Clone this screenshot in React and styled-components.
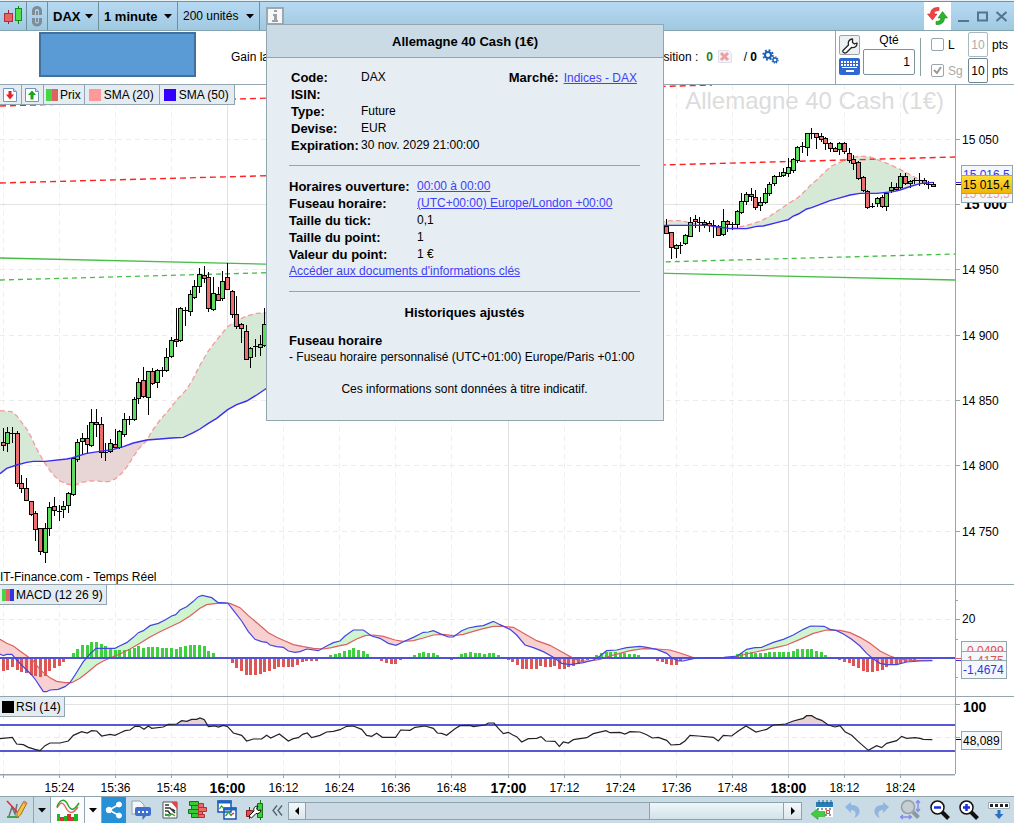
import React from 'react';
import styled, { createGlobalStyle, css } from 'styled-components';

const PLOT_WIDTH = 955;
const AXIS_WIDTH = 59;

// chart data is stored in thirds of a pixel
const UNIT = 3;
const HOUR_X = 227.5;
const MINUTE = 4.675;

const COLORS = {
    up: '#5ddc5d',
    down: '#ec6f6f',
    line: '#93a6af',
    blue: '#3a2cf0',
    panel: '#e4ecf2'
};

// [direction, body top, body bottom, high, low]; 'd' is a doji
const MORNING = {
    start: -48,
    top: 166,
    bars: [
        ['r', 577, 587, 535, 600], ['g', 547, 580, 530, 602], ['d', 549, 549, 530, 575], ['r', 549, 700, 543, 707],
        ['r', 698, 712, 675, 727], ['r', 713, 748, 685, 748], ['r', 752, 792, 752, 795], ['r', 788, 835, 783, 870],
        ['r', 833, 902, 833, 910], ['g', 833, 905, 820, 938], ['g', 772, 835, 757, 857], ['r', 768, 780, 740, 795],
        ['d', 782, 782, 765, 810], ['g', 768, 777, 752, 800], ['g', 730, 767, 725, 785], ['g', 625, 733, 625, 735],
        ['g', 577, 628, 568, 635], ['g', 565, 574, 550, 610], ['r', 563, 580, 525, 610], ['g', 515, 583, 477, 587],
        ['r', 515, 522, 477, 558], ['r', 522, 605, 500, 620], ['d', 605, 605, 580, 632], ['g', 580, 603, 568, 608],
        ['r', 581, 590, 538, 592], ['g', 542, 590, 540, 595], ['g', 508, 553, 488, 558], ['d', 506, 506, 497, 522],
        ['g', 448, 508, 440, 510], ['g', 396, 444, 385, 460], ['r', 390, 437, 350, 440], ['g', 362, 440, 362, 490],
        ['r', 364, 400, 355, 402], ['g', 360, 397, 358, 413], ['d', 359, 359, 350, 377], ['g', 322, 360, 293, 362],
        ['g', 270, 318, 262, 322], ['r', 268, 274, 173, 288], ['g', 175, 270, 170, 273], ['d', 181, 181, 170, 225],
        ['g', 133, 185, 120, 195], ['g', 107, 140, 90, 145], ['g', 72, 107, 55, 127], ['r', 74, 82, 48, 95],
        ['r', 80, 172, 65, 182], ['g', 128, 175, 80, 180], ['r', 131, 148, 112, 150], ['g', 94, 145, 62, 148],
        ['r', 82, 117, 40, 118], ['r', 123, 192, 120, 200], ['r', 192, 229, 137, 232], ['r', 223, 235, 218, 275],
        ['r', 242, 325, 225, 328], ['g', 294, 322, 292, 353], ['d', 289, 289, 268, 320], ['g', 281, 290, 255, 315],
        ['g', 222, 284, 175, 290]
    ],
    fast: [[0, 482], [35, 485], [50, 497], [65, 517], [80, 537], [93, 560], [107, 590], [120, 615], [135, 640], [150, 662], [165, 680], [180, 693], [200, 702], [225, 706], [245, 697], [270, 693], [290, 692], [315, 696], [330, 694], [347, 686], [365, 670], [385, 645], [400, 620], [420, 592], [440, 572], [455, 545], [480, 510], [505, 482], [530, 450], [560, 418], [580, 385], [600, 345], [625, 303], [650, 270], [683, 230], [710, 212], [740, 198], [770, 190], [810, 187]],
    slow: [[0, 671], [20, 655], [50, 645], [80, 637], [100, 634], [135, 634], [200, 627], [215, 624], [260, 610], [300, 604], [340, 598], [370, 590], [400, 579], [440, 570], [480, 567], [515, 564], [550, 562], [580, 548], [600, 537], [625, 520], [650, 505], [683, 479], [710, 464], [740, 453], [770, 435], [810, 408]]
};

const EVENING = {
    start: 94,
    top: 26,
    bars: [
        ['r', 347, 367, 328, 370], ['r', 367, 413, 365, 443], ['g', 405, 415, 403, 443], ['d', 405, 405, 395, 428],
        ['g', 376, 400, 373, 403], ['g', 336, 377, 322, 380], ['r', 328, 335, 315, 350], ['d', 336, 336, 320, 362],
        ['r', 336, 343, 330, 352], ['r', 338, 345, 333, 362], ['d', 346, 346, 330, 380], ['r', 347, 373, 345, 375],
        ['g', 334, 374, 298, 376], ['r', 334, 344, 330, 362], ['d', 343, 343, 335, 357], ['g', 304, 342, 300, 350],
        ['g', 272, 305, 248, 307], ['g', 253, 275, 245, 280], ['r', 253, 260, 233, 270], ['r', 260, 289, 240, 297],
        ['g', 275, 285, 262, 302], ['g', 250, 278, 235, 280], ['g', 222, 250, 215, 253], ['g', 199, 220, 195, 225],
        ['d', 197, 197, 187, 200], ['g', 187, 195, 175, 200], ['g', 172, 190, 145, 200], ['g', 148, 180, 145, 188],
        ['g', 112, 150, 108, 157], ['d', 109, 109, 95, 125], ['g', 70, 112, 68, 135], ['d', 68, 68, 55, 85],
        ['r', 70, 82, 68, 112], ['r', 78, 88, 70, 95], ['r', 84, 100, 80, 115], ['r', 100, 115, 95, 123],
        ['r', 113, 121, 110, 123], ['g', 100, 118, 95, 130], ['r', 100, 125, 95, 128], ['r', 128, 148, 113, 155],
        ['r', 148, 160, 135, 178], ['r', 155, 202, 152, 205], ['r', 202, 240, 198, 243], ['r', 242, 291, 240, 293],
        ['d', 288, 288, 280, 293], ['g', 264, 278, 262, 290], ['r', 261, 288, 255, 292], ['g', 250, 288, 248, 300],
        ['g', 232, 240, 215, 245], ['r', 230, 236, 220, 240], ['g', 199, 232, 190, 235], ['r', 199, 220, 190, 222],
        ['g', 213, 219, 210, 230], ['d', 211, 211, 205, 220], ['d', 211, 211, 190, 225], ['r', 211, 220, 205, 222],
        ['d', 222, 222, 212, 232], ['r', 222, 227, 215, 228]
    ],
    fast: [[1980, 337], [2010, 332], [2040, 332], [2065, 337], [2080, 340], [2120, 345], [2160, 350], [2190, 352], [2220, 351], [2250, 343], [2280, 334], [2310, 318], [2340, 298], [2365, 281], [2395, 262], [2420, 238], [2435, 222], [2450, 210], [2475, 185], [2495, 168], [2525, 155], [2540, 147], [2560, 142], [2580, 138], [2610, 141], [2640, 152], [2670, 164], [2700, 178], [2730, 194], [2760, 210], [2785, 221]],
    slow: [[1980, 346], [2030, 346], [2080, 346], [2120, 346], [2155, 351], [2190, 356], [2240, 356], [2270, 349], [2290, 348], [2330, 338], [2365, 329], [2380, 318], [2395, 312], [2420, 297], [2435, 293], [2490, 272], [2525, 262], [2550, 255], [2580, 250], [2630, 250], [2680, 245], [2700, 240], [2735, 228], [2760, 221], [2800, 217]]
};

const MACD_LINE = [[0, 222], [10, 227], [20, 223], [36, 223], [50, 240], [65, 255], [80, 270], [95, 285], [107, 300], [120, 320], [130, 335], [140, 335], [150, 330], [175, 328], [195, 320], [210, 308], [225, 285], [250, 245], [270, 222], [288, 205], [345, 205], [360, 197], [380, 188], [400, 172], [415, 158], [430, 152], [450, 137], [475, 130], [495, 120], [515, 108], [527, 104], [540, 90], [560, 80], [580, 64], [595, 50], [607, 46], [635, 53], [653, 67], [683, 69], [705, 97], [725, 123], [745, 155], [765, 178], [785, 185], [800, 187], [810, 195], [830, 200], [850, 202], [865, 213], [885, 217], [900, 215], [920, 207], [955, 212], [980, 198], [1000, 188], [1020, 183], [1035, 168], [1060, 150], [1090, 150], [1115, 168], [1140, 175], [1165, 190], [1188, 196], [1215, 183], [1240, 172], [1270, 157], [1285, 156], [1300, 152], [1325, 163], [1345, 171], [1360, 171], [1385, 152], [1405, 144], [1430, 139], [1450, 137], [1480, 124], [1500, 134], [1530, 148], [1550, 165], [1575, 195], [1600, 203], [1630, 215], [1660, 232], [1685, 250], [1710, 254], [1750, 248], [1780, 240], [1800, 228], [1820, 212], [1850, 210], [1880, 203], [1920, 199], [1940, 202], [1970, 208], [2000, 220], [2015, 233], [2035, 243], [2050, 243], [2070, 238], [2090, 234], [2172, 232], [2212, 228], [2240, 208], [2265, 203], [2285, 202], [2320, 187], [2350, 178], [2380, 165], [2410, 148], [2432, 138], [2472, 139], [2490, 148], [2510, 152], [2530, 162], [2555, 178], [2580, 198], [2600, 220], [2620, 237], [2640, 250], [2660, 254], [2690, 254], [2720, 246], [2760, 243], [2797, 242]];

const MACD_SIGNAL = [[0, 178], [20, 190], [40, 198], [60, 213], [80, 227], [100, 243], [115, 262], [130, 278], [150, 293], [170, 304], [195, 308], [215, 308], [240, 295], [265, 275], [290, 254], [310, 243], [330, 234], [360, 222], [390, 207], [420, 190], [450, 171], [480, 155], [510, 141], [540, 127], [570, 108], [600, 85], [620, 74], [650, 70], [690, 70], [720, 83], [745, 107], [775, 132], [805, 158], [830, 172], [855, 183], [880, 194], [910, 200], [940, 205], [970, 207], [995, 203], [1020, 197], [1040, 193], [1070, 177], [1095, 167], [1120, 165], [1150, 169], [1185, 180], [1210, 184], [1240, 182], [1270, 174], [1300, 165], [1330, 163], [1360, 167], [1390, 163], [1420, 154], [1450, 146], [1480, 139], [1510, 139], [1540, 142], [1580, 165], [1610, 182], [1650, 196], [1690, 218], [1720, 235], [1740, 243], [1770, 243], [1800, 238], [1830, 228], [1860, 220], [1890, 212], [1930, 206], [1970, 207], [2010, 210], [2040, 219], [2080, 233], [2130, 233], [2200, 232], [2240, 222], [2280, 213], [2330, 202], [2360, 195], [2400, 178], [2440, 160], [2480, 150], [2520, 151], [2550, 158], [2580, 172], [2610, 190], [2640, 213], [2670, 228], [2700, 238], [2740, 241], [2797, 241]];

const HISTOGRAM = [
    -40, -35, -27, -35, -42, -44, -50, -55, -58, -53, -40, -31, -24, -13, -4,
    14, 28, 38, 40, 48, 48, 42, 36, 30, 25, 25, 25, 27, 30, 36, 30, 34, 32, 32, 30, 29, 30, 27, 34, 35, 38, 38, 38, 35, 20, 14, 4, 4,
    -4, -14, -30, -38, -50, -52, -52, -48, -42, -40, -32, -28, -26, -28, -26, -22, -12, -8, -8, -8, -2,
    4, 8, 12, 14, 22, 24, 29, 24, 21, 13, 0, 0, -8, -14, -17, -17, -7, 0, 4, 8, 14, 18, 15, 14, 8, 0, -4, -7, 0,
    12, 15, 18, 15, 15, 12, 15, 15, 8, -4, -7, -12, -22, -32, -32, -32, -32, -24, -28, -28, -24, -32, -32, -28, -24, -18, -12, -7,
    4, 8, 14, 18, 18, 18, 15, 15, 12, 12, 8, 4, 0, -4, -8, -12, -18, -22, -20, -10, -4, 0, 0, 0, 0, 0, 0, 0, 0, 0,
    6, 12, 16, 18, 18, 14, 15, 14, 18, 19, 18, 18, 18, 22, 26, 26, 26, 26, 22, 18, 10, 4,
    -2, -6, -12, -16, -24, -30, -38, -42, -42, -38, -36, -28, -20, -20, -14, -12, -8, -5
];

const RSI = [[0, 476], [37, 472], [50, 492], [70, 494], [85, 502], [105, 508], [120, 512], [135, 497], [150, 489], [180, 489], [205, 483], [220, 466], [245, 455], [262, 459], [275, 452], [290, 453], [305, 468], [330, 463], [345, 466], [360, 459], [375, 452], [390, 450], [405, 439], [418, 439], [432, 448], [445, 438], [455, 445], [490, 441], [505, 433], [530, 432], [545, 422], [560, 424], [575, 418], [590, 418], [600, 414], [613, 419], [625, 440], [645, 438], [655, 441], [670, 436], [683, 440], [700, 459], [725, 466], [740, 483], [760, 477], [785, 477], [800, 466], [812, 474], [838, 462], [865, 483], [880, 476], [895, 473], [908, 463], [922, 459], [935, 473], [960, 466], [980, 456], [1000, 454], [1020, 449], [1040, 439], [1060, 438], [1085, 448], [1100, 466], [1115, 469], [1130, 460], [1147, 472], [1187, 472], [1202, 450], [1230, 451], [1245, 442], [1275, 438], [1300, 445], [1312, 459], [1325, 460], [1340, 466], [1365, 446], [1380, 437], [1410, 436], [1420, 440], [1455, 435], [1465, 429], [1482, 429], [1495, 445], [1510, 461], [1525, 457], [1540, 466], [1550, 470], [1565, 486], [1585, 476], [1610, 475], [1623, 470], [1637, 483], [1665, 484], [1678, 499], [1690, 486], [1705, 489], [1720, 479], [1760, 473], [1780, 461], [1818, 452], [1830, 458], [1860, 457], [1875, 462], [1890, 455], [1920, 456], [1940, 464], [1957, 474], [1975, 472], [2000, 481], [2013, 495], [2040, 493], [2055, 483], [2070, 466], [2095, 468], [2140, 472], [2155, 483], [2170, 466], [2195, 468], [2215, 453], [2238, 438], [2268, 456], [2300, 448], [2320, 435], [2357, 432], [2380, 423], [2410, 415], [2420, 407], [2435, 407], [2450, 416], [2465, 421], [2485, 435], [2505, 441], [2520, 437], [2535, 455], [2555, 466], [2575, 485], [2605, 511], [2630, 497], [2645, 503], [2660, 490], [2690, 482], [2705, 469], [2720, 475], [2745, 473], [2760, 475], [2770, 478], [2797, 479]];

const TIMES = [
    '', '15:24', '15:36', '15:48', '16:00', '16:12', '16:24', '16:36', '16:48', '17:00',
    '17:12', '17:24', '17:36', '17:48', '18:00', '18:12', '18:24'
].map((label, i) => ({
    label,
    x: Math.floor(HOUR_X + (i - 4) * 12 * MINUTE) + 0.5,
    hour: label.endsWith(':00')
}));

const PRICES = [
    { label: '15 050', y: 55 },
    { label: '15 000', y: 120, bold: true },
    { label: '14 950', y: 185 },
    { label: '14 900', y: 251 },
    { label: '14 850', y: 316 },
    { label: '14 800', y: 381 },
    { label: '14 750', y: 447 }
];

const GlobalStyle = createGlobalStyle`
    body {
        margin: 0;
        background: #fff;
        color: #000;
        font: 12px/17px "Liberation Sans", Arial, sans-serif;
    }
    *, *::before, *::after {
        box-sizing: border-box;
    }
    button, input, select {
        font: inherit;
        color: inherit;
    }
    text {
        font-family: "Liberation Sans", Arial, sans-serif;
    }
`;

const Page = styled.div`
    display: flex;
    flex-direction: column;
    min-height: 100vh;
    overflow: hidden;
`;

const TitleBar = styled.header`
    display: flex;
    align-items: stretch;
    height: 31px;
    padding-top: 2px;
    border-bottom: 1px solid #86a3b0;
    background: linear-gradient(#b9dbf4, #9fc9e0);
    box-shadow: inset 0 1px #e9f1f5, inset 0 2px #6f93a2;
`;

const barCell = css`
    display: flex;
    align-items: center;
    justify-content: center;
    border: 0;
    border-right: 1px solid #6e8fa0;
    background: none;
    padding: 0;
`;

const IconCell = styled.button`
    ${barCell}
    width: ${props => props.$width}px;
`;

const SelectCell = styled.div`
    ${barCell}
    position: relative;
    width: ${props => props.$width}px;
    select {
        appearance: none;
        width: 100%;
        height: 100%;
        padding: 1px 0 0 5px;
        border: 0;
        background: none;
        font-size: ${props => (props.$bold ? 13 : 12)}px;
        font-weight: ${props => (props.$bold ? 'bold' : 'normal')};
    }
    svg {
        position: absolute;
        right: 5px;
        top: 12px;
        pointer-events: none;
    }
`;

const InfoAnchor = styled.div`
    position: relative;
    display: flex;
    align-items: center;
    margin-left: 6px;
`;

const InfoButton = styled.button`
    display: flex;
    align-items: center;
    justify-content: center;
    width: 18px;
    height: 18px;
    padding: 0;
    border: 2px solid #9da7ad;
    background: #f5f7f8;
`;

const WindowButtons = styled.div`
    display: flex;
    align-items: center;
    margin-left: auto;
    padding-right: 3px;
`;

const RefreshButton = styled.button`
    display: flex;
    align-items: center;
    justify-content: center;
    width: 27px;
    height: 28px;
    margin-right: 3px;
    padding: 0;
    border: 0;
    background: #fff;
`;

const WindowButton = styled.button`
    display: flex;
    width: 19px;
    justify-content: center;
    padding: 0;
    border: 0;
    background: none;
`;

const Popup = styled.section`
    position: absolute;
    z-index: 10;
    top: 22px;
    left: 0;
    width: 398px;
    padding-bottom: 22px;
    border: 1px solid #93a5b0;
    background: #e6edf3;
    p {
        margin: 0;
    }
`;

const PopupTitle = styled.h2`
    margin: 0;
    padding: 8px 0 7px;
    border-bottom: 1px solid #93a5b0;
    background: #cbdbe5;
    font-size: 13px;
    line-height: 17px;
    text-align: center;
`;

const PopupBody = styled.div`
    padding: 11px 23px 0 22px;
`;

const PopupHeading = styled.h3`
    margin: 0 0 ${props => (props.$center ? 11 : 0)}px;
    font-size: 13px;
    text-align: ${props => (props.$center ? 'center' : 'left')};
`;

const InfoRow = styled.div`
    display: flex;
    height: 17px;
    white-space: nowrap;
    dt {
        width: ${props => props.$label}px;
        font-size: 13px;
        font-weight: bold;
    }
    dd {
        margin: 0;
    }
`;

const InfoList = styled.dl`
    margin: 0;
    padding-left: ${props => props.$indent || 0}px;
`;

const Market = styled.span`
    margin-left: auto;
    padding-right: 3px;
    b {
        margin-right: 5px;
        font-size: 13px;
    }
`;

const Rule = styled.hr`
    height: 1px;
    margin: 11px 0 12px;
    border: 0;
    background: #93a5b0;
`;

const Link = styled.a`
    color: #4141f5;
`;

const Note = styled.p`
    padding-top: 15px;
    text-align: center;
`;

const OrderBar = styled.section`
    display: flex;
    height: 53px;
    line-height: 14px;
    white-space: nowrap;
`;

const Account = styled.div`
    width: 157px;
    height: 45px;
    margin: 1px 35px 0 39px;
    border: 2px solid #41719c;
    background: #5b9bd5;
`;

const Status = styled.div`
    display: flex;
    align-items: center;
    gap: 5px;
    padding-bottom: 2px;
`;

const Position = styled(Status)`
    margin-left: auto;
    margin-right: 56px;
`;

const Zero = styled.b`
    color: #1d7f1d;
    margin-left: 3px;
`;

const OrderPanel = styled.div`
    display: flex;
    width: 179px;
    border-left: 1px solid #93a5b0;
`;

const ToolButtons = styled.div`
    display: flex;
    flex-direction: column;
    gap: 3px;
    padding: 4px 3px;
`;

const ToolButton = styled.button`
    display: flex;
    align-items: center;
    justify-content: center;
    width: 21px;
    height: ${props => (props.$blue ? 17 : 20)}px;
    padding: 0;
    border: ${props => (props.$blue ? '0' : '1px solid #9aa5ab')};
    border-radius: 2px;
    background: ${props => (props.$blue ? '#2f68d0' : '#eef1f3')};
`;

const Quantity = styled.label`
    display: flex;
    flex-direction: column;
    align-items: center;
    gap: 2px;
    padding-top: 2px;
    input {
        width: 52px;
        height: 26px;
        padding: 0 4px;
        border: 1px solid #7e929b;
        border-radius: 2px;
        text-align: right;
    }
`;

const Limits = styled.div`
    display: grid;
    grid-template-columns: 13px 16px 20px 22px;
    grid-template-rows: 25px 25px;
    column-gap: 4px;
    row-gap: 1px;
    align-items: center;
    margin: 1px 0 1px 16px;
    position: relative;
    &::before {
        content: '';
        position: absolute;
        left: -11px;
        top: 6px;
        height: 38px;
        border-left: 1px solid #8aa39c;
    }
`;

const Check = styled.input`
    appearance: none;
    width: 13px;
    height: 13px;
    margin: 0;
    border: 1px solid #98a5ab;
    border-radius: 2px;
    background: #fff;
    &:checked {
        background: #fff url("data:image/svg+xml,%3Csvg xmlns='http://www.w3.org/2000/svg' viewBox='0 0 11 11'%3E%3Cpath d='M2 5l3 3 4-6' fill='none' stroke='%23999' stroke-width='2'/%3E%3C/svg%3E");
    }
`;

const LimitLabel = styled.label`
    color: ${props => (props.$muted ? '#a9a9a9' : '#000')};
`;

const LimitInput = styled.input`
    width: 20px;
    height: 25px;
    padding: 0;
    border: 1px solid ${props => (props.disabled ? '#a9b8bf' : '#6f868f')};
    border-radius: 2px;
    background: #fff;
    color: ${props => (props.disabled ? '#aaa' : '#000')};
    text-align: center;
`;

const Panel = styled.section`
    position: relative;
    display: flex;
    height: ${props => props.$height}px;
    border-top: 1px solid ${COLORS.line};
`;

const Plot = styled.div`
    display: flex;
    flex: 1;
    min-width: 0;
    justify-content: flex-end;
    overflow: hidden;
    svg {
        flex: none;
    }
`;

const AxisSvg = styled.svg`
    flex: none;
    overflow: visible;
`;

const Legend = styled.div`
    position: absolute;
    top: 0;
    left: 0;
    display: flex;
    height: 20px;
    border-bottom: 1px solid ${COLORS.line};
    background: ${COLORS.panel};
`;

const LegendItem = styled.button`
    display: flex;
    align-items: center;
    gap: ${props => (props.$compact ? 2 : 3)}px;
    padding: ${props => (props.$compact ? '1px 3px 0 2px' : '1px 5px 0 4px')};
    border: 0;
    border-right: 1px solid ${COLORS.line};
    background: none;
    white-space: nowrap;
`;

const Swatch = styled.span`
    width: 12px;
    height: 12px;
    background: ${props => props.$fill};
`;

const Toolbar = styled.footer`
    display: flex;
    align-items: stretch;
    height: 27px;
    border-top: 1px solid #8fa3ad;
    background: #c9dbe5;
`;

const BACKGROUNDS = {
    white: '#fbfcfd',
    blue: '#2790d6',
    none: 'transparent'
};

const Tool = styled.button`
    display: flex;
    align-items: center;
    justify-content: center;
    width: ${props => props.$width}px;
    padding: 0;
    border: 0;
    border-right: ${props => (props.$divider ? '1px solid #93a5b0' : '0')};
    background: ${props => BACKGROUNDS[props.$tone || 'none']};
    opacity: ${props => (props.disabled ? 0.7 : 1)};
`;

const ScrollBar = styled.div`
    display: flex;
    flex: 1;
    height: 18px;
    margin: 5px 4px 0 2px;
    border: 1px solid #8fa3ad;
    background: #cbd9e5;
`;

const ScrollTrack = styled.div`
    flex: 346;
`;

const ScrollThumb = styled.div`
    flex: 134;
    border: solid #8fa3ad;
    border-width: 0 1px;
    background: linear-gradient(#ecf7f9, #d2e2e9);
`;

const ScrollButton = styled.button`
    display: flex;
    align-items: center;
    justify-content: center;
    width: 17px;
    padding: 0;
    border: 0;
    border-right: ${props => (props.$left ? '1px solid #8fa3ad' : '0')};
    background: linear-gradient(#f4f8fa, #dbe6ec);
`;

const TimeAxis = styled.div`
    display: flex;
    height: 22px;
    padding-right: ${AXIS_WIDTH}px;
`;

const toPoints = (points, top) => points.map(([x, y]) => `${x / UNIT},${y / UNIT + top}`).join(' ');

const Caret = () => (
    <svg width="8" height="5"><path d="M0 0h8L4 4.5z" /></svg>
);

// Area between two lines, green where the first one is on top
const Band = ({ id, first, second, top, up, down }) => {
    const edge = toPoints(second, top);
    const firstX = second[0][0] / UNIT;
    const lastX = second[second.length - 1][0] / UNIT;
    const area = `${toPoints(first, top)} ${toPoints([...second].reverse(), top)}`;
    return (
        <g>
            <clipPath id={`${id}-above`}>
                <polygon points={`${edge} ${lastX},-9 ${firstX},-9`} />
            </clipPath>
            <clipPath id={`${id}-below`}>
                <polygon points={`${edge} ${lastX},900 ${firstX},900`} />
            </clipPath>
            <polygon points={area} fill={up} clipPath={`url(#${id}-above)`} />
            <polygon points={area} fill={down} clipPath={`url(#${id}-below)`} />
        </g>
    );
};

const Grid = ({ height, dashed, solid }) => (
    <g shapeRendering="crispEdges" stroke="#ececec">
        {TIMES.map(time => (
            <line key={time.x} x1={time.x} x2={time.x} y1="0" y2={height} strokeDasharray={time.hour ? undefined : '5 4'} stroke={time.hour ? '#e2e2e2' : '#efefef'} />
        ))}
        {dashed.map(y => <line key={y} x1="0" x2={PLOT_WIDTH} y1={y} y2={y} strokeDasharray="5 4" />)}
        {solid.map(y => <line key={y} x1="0" x2={PLOT_WIDTH} y1={y} y2={y} stroke="#e2e2e2" />)}
    </g>
);

const Candles = ({ series }) => (
    <g shapeRendering="crispEdges">
        {series.bars.map(([kind, open, close, high, low], i) => {
            const x = Math.floor(HOUR_X + (series.start + i) * MINUTE);
            const y = Math.round(open / UNIT + series.top) - 1;
            const height = Math.max(1, Math.round((close - open) / UNIT) + 1);
            return (
                <g key={x}>
                    <rect x={x} y={Math.round(high / UNIT + series.top) - 1} width="1" height={Math.round((low - high) / UNIT) + 1} />
                    <rect x={x - 2} y={y} width="5" height={kind === 'd' ? 1 : height} />
                    {kind !== 'd' && height > 2 && (
                        <rect x={x - 1} y={y + 1} width="3" height={height - 2} fill={kind === 'g' ? COLORS.up : COLORS.down} />
                    )}
                </g>
            );
        })}
    </g>
);

const PriceSeries = ({ id, series }) => (
    <g>
        <Band id={id} first={series.fast} second={series.slow} top={series.top - 1} up="#d6e8d6" down="#e8d6d6" />
        <polyline points={toPoints(series.fast, series.top - 1)} fill="none" stroke="#f79a9a" strokeWidth="1.3" strokeDasharray="5 3" />
    </g>
);

const Tag = ({ y, width, fill = '#f4f8fa', color, children }) => (
    <g>
        <rect x="6.5" y={y + 0.5} width={width} height="18" fill={fill} stroke="#93a5ad" />
        <text x="8" y={y + 14} fontSize="12" fill={color}>{children}</text>
    </g>
);

const PriceAxis = () => (
    <AxisSvg width={AXIS_WIDTH} height="499">
        <defs>
            <linearGradient id="gold" x2="0" y2="1">
                <stop offset="0" stopColor="#ffde35" />
                <stop offset="1" stopColor="#f0b400" />
            </linearGradient>
        </defs>
        <line x1="0.5" x2="0.5" y1="0" y2="499" stroke={COLORS.line} />
        {PRICES.map(price => (
            <g key={price.label}>
                <line x1="1" x2="5" y1={price.y - 0.5} y2={price.y - 0.5} stroke={COLORS.line} />
                <text x={price.bold ? 9 : 7} y={price.y + 4} fontSize={price.bold ? 14 : 12} fontWeight={price.bold ? 'bold' : 'normal'}>{price.label}</text>
            </g>
        ))}
        <path d="M1 97.5h5" stroke={COLORS.blue} />
        <path d="M1 99.5h5" stroke="#000" />
        <Tag y={80} width={51} color="#3636e8">15 016,5</Tag>
        <Tag y={99} width={51} color="#f79a9a">15 015,5</Tag>
        <Tag y={90} width={51} fill="url(#gold)" color="#000">15 015,4</Tag>
    </AxisSvg>
);

const ArrowPage = ({ color, up }) => (
    <svg width="16" height="14" viewBox="0 0 16 14">
        <path d="M1.5 .5h10l3 3v10h-13z" fill="#fff" stroke="#6f97c0" />
        <path d="M11.5 .5v3h3" fill="#c8dcf0" stroke="#6f97c0" />
        <path d={up ? 'M8 2.5l4 4.500H9.500v4.500h-3V7H4z' : 'M6.500 3h3v3.500H12L8 11.500 4 6.500h2.500z'} fill={color} />
    </svg>
);

const PricePanel = () => (
    <Panel $height={500}>
        <Plot>
            <svg width={PLOT_WIDTH} height="499">
                <Grid height={499} dashed={PRICES.filter(p => !p.bold).map(p => p.y - 0.5)} solid={[119.5]} />
                <text x="944" y="24" fontSize="24" textAnchor="end" fill="#dcdcdc">Allemagne 40 Cash (1€)</text>
                <PriceSeries id="morning" series={MORNING} />
                <PriceSeries id="evening" series={EVENING} />
                <g stroke="#f22" strokeWidth="1.4" strokeDasharray="6 4">
                    <line x1="0" y1="21" x2="712" y2="0" />
                    <line x1="0" y1="98" x2="955" y2="72" />
                </g>
                <g stroke="#46bd46" strokeWidth="1.3">
                    <line x1="0" y1="173" x2="955" y2="195" />
                    <line x1="0" y1="195" x2="955" y2="169" strokeDasharray="5 4" />
                </g>
                <Candles series={MORNING} />
                <Candles series={EVENING} />
                <polyline points={toPoints(MORNING.slow, MORNING.top - 1)} fill="none" stroke={COLORS.blue} strokeWidth="1.4" />
                <polyline points={toPoints(EVENING.slow, EVENING.top - 1)} fill="none" stroke={COLORS.blue} strokeWidth="1.4" />
                <text x="0" y="496" fontSize="12">IT-Finance.com - Temps Réel</text>
            </svg>
        </Plot>
        <PriceAxis />
        <Legend>
            <LegendItem $compact aria-label="Vendre"><ArrowPage color="#e5202a" /></LegendItem>
            <LegendItem $compact aria-label="Acheter"><ArrowPage color="#17a517" up /></LegendItem>
            <LegendItem $compact><Swatch $fill="linear-gradient(90deg, #43d843 50%, #de6262 50%)" />Prix</LegendItem>
            <LegendItem><Swatch $fill="#ff9999" />SMA (20)</LegendItem>
            <LegendItem><Swatch $fill="#3300ff" />SMA (50)</LegendItem>
        </Legend>
    </Panel>
);

const MACD_ZERO = 73;

const MacdPanel = () => (
    <Panel $height={112}>
        <Plot>
            <svg width={PLOT_WIDTH} height="111">
                <Grid height={111} dashed={[34.5]} solid={[]} />
                <Band id="macd" first={MACD_LINE} second={MACD_SIGNAL} top={-5} up="#cff5cf" down="#f8d0d0" />
                <g shapeRendering="crispEdges">
                    {HISTOGRAM.map((value, i) => {
                        const height = Math.round(Math.abs(value) / UNIT);
                        return (
                            <rect
                                key={i}
                                x={Math.floor(HOUR_X + (i - 48) * MINUTE) - 1}
                                y={value > 0 ? MACD_ZERO - height : MACD_ZERO}
                                width="3"
                                height={height}
                                fill={value > 0 ? '#3ed03e' : '#dd5555'}
                            />
                        );
                    })}
                </g>
                <polyline points={toPoints(MACD_SIGNAL, -5)} fill="none" stroke="#dd5f5f" strokeWidth="1.2" />
                <rect y={MACD_ZERO - 1} width={PLOT_WIDTH} height="2" fill="#5050d8" />
                <polyline points={toPoints(MACD_LINE, -5)} fill="none" stroke="#4545e4" strokeWidth="1.2" />
            </svg>
        </Plot>
        <AxisSvg width={AXIS_WIDTH} height="111">
            <path d="M.5 0v111M1 15.5h2M1 34.5h4M1 54.5h2M1 92.5h2" stroke={COLORS.line} />
            <path d="M1 73.5h5" stroke="#dd5f5f" />
            <path d="M1 75.5h5" stroke={COLORS.blue} />
            <text x="7" y="38" fontSize="12">20</text>
            <Tag y={56} width={45} color="#dd5555">-0,0499</Tag>
            <Tag y={66} width={45} color="#dd5555">-1,4175</Tag>
            <Tag y={75} width={45} color="#3636e8">-1,4674</Tag>
        </AxisSvg>
        <Legend>
            <LegendItem $compact><Swatch $fill="linear-gradient(90deg, #43d843 34%, #de6262 34% 67%, #3333e0 67%)" />MACD (12 26 9)</LegendItem>
        </Legend>
    </Panel>
);

const RsiPanel = () => (
    <Panel $height={78}>
        <Plot>
            <svg width={PLOT_WIDTH} height="77">
                <clipPath id="overbought">
                    <rect width={PLOT_WIDTH} height="28" />
                </clipPath>
                <Grid height={77} dashed={[40.5]} solid={[7.5]} />
                <polygon points={`0,28 ${toPoints(RSI, -117)} 932,28`} fill="#e9d2d2" clipPath="url(#overbought)" />
                <g fill="#5858d6" shapeRendering="crispEdges">
                    <rect y="27" width={PLOT_WIDTH} height="2" />
                    <rect y="53" width={PLOT_WIDTH} height="2" />
                </g>
                <polyline points={toPoints(RSI, -117)} fill="none" stroke="#222" strokeWidth="1.2" />
            </svg>
        </Plot>
        <AxisSvg width={AXIS_WIDTH} height="77">
            <path d="M.5 0v77M1 7.5h4M1 40.5h4" stroke={COLORS.line} />
            <path d="M1 42.5h5" stroke="#000" />
            <text x="8" y="15" fontSize="14" fontWeight="bold">100</text>
            <Tag y={34} width={40} color="#000">48,089</Tag>
        </AxisSvg>
        <Legend>
            <LegendItem $compact><Swatch $fill="#000" />RSI (14)</LegendItem>
        </Legend>
    </Panel>
);

const RefreshIcon = () => (
    <svg width="21" height="20" viewBox="0 0 21 20">
        <path d="M12 1.500C6 1 3.500 4 3.500 8H.5l5 6 4.500-6H7.200C7.200 5.500 9 4.500 12 4.600z" fill="#ee4444" stroke="#c52a2a" strokeWidth=".6" />
        <path d="M9 18.500c6 .5 8.500-2.500 8.500-6.500h3l-5-6.500-4.500 6.500h2.800c0 2.500-1.800 3.500-4.800 3.400z" fill="#2ab52a" stroke="#188a18" strokeWidth=".6" />
    </svg>
);

const InfoPopup = () => (
    <Popup>
        <PopupTitle>Allemagne 40 Cash (1€)</PopupTitle>
        <PopupBody>
            <InfoList $indent={2}>
                <InfoRow $label={70}>
                    <dt>Code:</dt>
                    <dd>DAX</dd>
                    <Market><b>Marché:</b><Link href="#marche">Indices - DAX</Link></Market>
                </InfoRow>
                <InfoRow $label={70}><dt>ISIN:</dt><dd /></InfoRow>
                <InfoRow $label={70}><dt>Type:</dt><dd>Future</dd></InfoRow>
                <InfoRow $label={70}><dt>Devise:</dt><dd>EUR</dd></InfoRow>
                <InfoRow $label={70}><dt>Expiration:</dt><dd>30 nov. 2029 21:00:00</dd></InfoRow>
            </InfoList>
            <Rule />
            <InfoList>
                <InfoRow $label={128}><dt>Horaires ouverture:</dt><dd><Link href="#horaires">00:00 à 00:00</Link></dd></InfoRow>
                <InfoRow $label={128}><dt>Fuseau horaire:</dt><dd><Link href="#fuseau">(UTC+00:00) Europe/London +00:00</Link></dd></InfoRow>
                <InfoRow $label={128}><dt>Taille du tick:</dt><dd>0,1</dd></InfoRow>
                <InfoRow $label={128}><dt>Taille du point:</dt><dd>1</dd></InfoRow>
                <InfoRow $label={128}><dt>Valeur du point:</dt><dd>1 €</dd></InfoRow>
            </InfoList>
            <Link href="#documents">Accéder aux documents d'informations clés</Link>
            <Rule />
            <PopupHeading $center>Historiques ajustés</PopupHeading>
            <PopupHeading>Fuseau horaire</PopupHeading>
            <p>- Fuseau horaire personnalisé (UTC+01:00) Europe/Paris +01:00</p>
            <Note>Ces informations sont données à titre indicatif.</Note>
        </PopupBody>
    </Popup>
);

const Header = () => (
    <TitleBar>
        <IconCell $width={27} aria-label="Graphique">
            <svg width="20" height="20" viewBox="0 0 20 20">
                <path d="M5.500 4v14" stroke="#a32020" />
                <rect x="1.500" y="7.500" width="8" height="8" fill="#e86464" stroke="#b43030" />
                <path d="M15.500 0v18" stroke="#157c15" />
                <rect x="12.500" y="2.500" width="6" height="12" fill="#4fe04f" stroke="#189018" />
            </svg>
        </IconCell>
        <IconCell $width={21} aria-label="Lier">
            <svg width="12" height="21" viewBox="0 0 12 21" fill="none" stroke="#7f8d96" strokeWidth="3">
                <path d="M2.500 9V4.500a3.500 3 0 0 1 7 0V9M2.500 12v4a3.500 3 0 0 0 7 0v-4" />
                <path d="M6 5v4M6 12v4" strokeWidth="2" />
            </svg>
        </IconCell>
        <SelectCell $width={51} $bold>
            <select aria-label="Valeur"><option>DAX</option></select>
            <Caret />
        </SelectCell>
        <SelectCell $width={79} $bold>
            <select aria-label="Unité de temps"><option>1 minute</option></select>
            <Caret />
        </SelectCell>
        <SelectCell $width={82}>
            <select aria-label="Historique"><option>200 unités</option></select>
            <Caret />
        </SelectCell>
        <InfoAnchor>
            <InfoButton aria-label="Informations">
                <svg width="10" height="12" viewBox="0 0 10 12" fill="#9aa1a6">
                    <path d="M4 0h3v2H4zM3 4h4v6h1v2H2v-2h2V6H3z" />
                </svg>
            </InfoButton>
            <InfoPopup />
        </InfoAnchor>
        <WindowButtons>
            <RefreshButton aria-label="Actualiser"><RefreshIcon /></RefreshButton>
            {[['Réduire', 'M1 11h11'], ['Agrandir', 'M2 2.500h9v8H2z'], ['Fermer', 'M1.500 2l10 9M11.500 2l-10 9']].map(([label, path]) => (
                <WindowButton key={label} aria-label={label}>
                    <svg width="13" height="13" fill="none" stroke="#53758f" strokeWidth="2"><path d={path} /></svg>
                </WindowButton>
            ))}
        </WindowButtons>
    </TitleBar>
);

const Orders = () => (
    <OrderBar>
        <Account />
        <Status>Gain latent :</Status>
        <Position>
            <span>Position :</span>
            <Zero>0</Zero>
            <svg width="14" height="13" viewBox="0 0 14 13">
                <path d="M.5 .5h10l3 3v9H.5z" fill="#f3f4f8" stroke="#dbe2ea" />
                <path d="M3 3l7 7M10 3l-7 7" stroke="#eda0a0" strokeWidth="3" />
            </svg>
            <span>&nbsp; / <b>0</b></span>
            <svg width="17" height="15" viewBox="0 0 17 15" fill="none" stroke="#1b5fb5">
                <circle cx="6" cy="6" r="3" strokeWidth="2" />
                <circle cx="6" cy="6" r="4.800" strokeWidth="1.800" strokeDasharray="1.900 1.870" />
                <circle cx="13" cy="11" r="2" strokeWidth="1.300" />
                <circle cx="13" cy="11" r="3" strokeWidth="1.300" strokeDasharray="1.200 1.150" />
            </svg>
        </Position>
        <OrderPanel>
            <ToolButtons>
                <ToolButton aria-label="Paramètres">
                    <svg width="17" height="17" viewBox="0 0 17 17" fill="#fff" stroke="#222" strokeWidth="1.300" strokeLinejoin="round">
                        <path d="M2 13.500l5.500-5.500C6.800 5 8 2 11.500 2v3.500l2 1.500 2.500-1c.3 3.500-2.500 5-5.500 4.500l-5 5c-2 1.300-4.500-.500-3.500-2z" />
                    </svg>
                </ToolButton>
                <ToolButton $blue aria-label="Clavier">
                    <svg width="17" height="12" fill="#fff">
                        <path d="M0 0h2v2H0zM3 0h2v2H3zM6 0h2v2H6zM9 0h2v2H9zM12 0h2v2h-2zM15 0h2v2h-2zM0 3h2v2H0zM3 3h2v2H3zM6 3h2v2H6zM9 3h2v2H9zM12 3h2v2h-2zM15 3h2v2h-2zM1 6h15v1H1zM5 9h8v2H5z" />
                    </svg>
                </ToolButton>
            </ToolButtons>
            <Quantity>
                Qté
                <input defaultValue="1" />
            </Quantity>
            <Limits>
                <Check type="checkbox" id="limit" />
                <LimitLabel htmlFor="limit">L</LimitLabel>
                <LimitInput disabled defaultValue="10" aria-label="Points limite" />
                <span>pts</span>
                <Check type="checkbox" id="stop" defaultChecked />
                <LimitLabel htmlFor="stop" $muted>Sg</LimitLabel>
                <LimitInput defaultValue="10" aria-label="Points stop" />
                <span>pts</span>
            </Limits>
        </OrderPanel>
    </OrderBar>
);

const Magnifier = ({ sign }) => (
    <svg width="22" height="22" viewBox="0 0 22 22">
        <path d="M13 13l6.500 6.500" stroke="#111" strokeWidth="4" />
        <circle cx="8.500" cy="8.500" r="6.500" fill="#fff" stroke="#111" strokeWidth="1.500" />
        <path d={sign} stroke="#1b2fe0" strokeWidth="2.500" />
    </svg>
);

const BottomBar = () => (
    <Toolbar>
        <Tool $width={34} $divider aria-label="Dessiner">
            <svg width="22" height="22" viewBox="0 0 22 22" fill="none">
                <path d="M1 18h12" stroke="#3fa54b" strokeWidth="2" />
                <path d="M3 17L6 8l3 7 2-10" stroke="#68747c" strokeWidth="1.500" />
                <path d="M1 2l12 13" stroke="#e02e2e" strokeWidth="1.500" />
                <path d="M18 2l3 2-6.500 12-3.500 3v-5z" fill="#f5c33c" stroke="#a0701e" />
                <path d="M18 2l3 2-1.200 2-3-2z" fill="#e58080" />
            </svg>
        </Tool>
        <Tool $width={17} $divider aria-label="Outils de dessin"><Caret /></Tool>
        <Tool $width={34} $tone="white" $divider aria-label="Indicateurs">
            <svg width="24" height="22" viewBox="0 0 24 22" fill="none">
                <path d="M1 9c4-7 6-6 9 0s7 6 12-1" stroke="#e36464" strokeWidth="1.500" />
                <path d="M1 8C4-1 9 0 12 6s6 6 11-2" stroke="#27a327" strokeWidth="1.500" />
                <path d="M1 15h3v7H1zM8 17h3v5H8zM18 15h4v7h-4z" fill="#1fb81f" />
                <path d="M4 18h4v4H4zM11 15h4v7h-4zM15 18h3v4h-3z" fill="#d43636" />
            </svg>
        </Tool>
        <Tool $width={17} $tone="white" $divider aria-label="Liste des indicateurs"><Caret /></Tool>
        <Tool $width={24} $tone="blue" aria-label="Partager">
            <svg width="18" height="18" viewBox="0 0 18 18" fill="#fff" stroke="#fff">
                <path d="M14 3.500L4 9l10 5.500" fill="none" strokeWidth="1.500" />
                <circle cx="14" cy="3.500" r="2.500" /><circle cx="4" cy="9" r="2.800" /><circle cx="14" cy="14.500" r="2.500" />
            </svg>
        </Tool>
        <Tool $width={30} aria-label="Messages">
            <svg width="20" height="20" viewBox="0 0 20 20">
                <path d="M1 1h8l4 4v9H1z" fill="#f4f7fa" stroke="#8ea2b4" />
                <path d="M6 7h12a2 2 0 0 1 2 2v5a2 2 0 0 1-2 2h-3l-3.500 4v-4H6a2 2 0 0 1-2-2V9a2 2 0 0 1 2-2z" fill="#3d6fd0" />
                <path d="M7 11h2v2H7zM11 11h2v2h-2zM15 11h2v2h-2z" fill="#fff" />
            </svg>
        </Tool>
        <Tool $width={28} aria-label="Rapport">
            <svg width="16" height="18" viewBox="0 0 16 18" fill="none">
                <path d="M1 1h14v16H1z" fill="#fff" stroke="#555" />
                <path d="M9 1h6v7z" fill="#e04848" />
                <path d="M3 4h4M3 7h5l5 5M3 10h3l3 4M10 8l3 2M3 14h4" stroke="#333" strokeWidth="1.500" />
                <path d="M3 13l4 2 3-2 3 2" stroke="#3aa83a" strokeWidth="1.500" />
            </svg>
        </Tool>
        <Tool $width={28} aria-label="Carnet d'ordres">
            <svg width="20" height="18" viewBox="0 0 20 18">
                <path d="M1.500 .5h9v4h-9zM3.500 4.500h7v4h-7zM.5 8.500h10v4H.5zM3.500 12.500h7v4h-7z" fill="#38c838" stroke="#167516" />
                <path d="M10.500 2.500h5v4h-5zM10.500 6.500h8v4h-8zM10.500 10.500h4v3h-4zM10.500 13.500h6v3h-6z" fill="#e86a6a" stroke="#b33131" />
            </svg>
        </Tool>
        <Tool $width={29} aria-label="Fenêtres">
            <svg width="20" height="20" viewBox="0 0 20 20">
                <path d="M1 1h13v11H1zM7 8h12v11H7z" fill="#fff" stroke="#1a55ae" strokeWidth="1.500" />
                <path d="M.5 .5h14v3H.5zM6.500 7.500h13v3h-13z" fill="#1f62c4" />
                <path d="M2.500 9l2-3 2 2" fill="none" stroke="#28a428" strokeWidth="1.300" />
                <path d="M8.500 16l3-4 3 4" fill="none" stroke="#28a428" strokeWidth="1.300" />
                <path d="M14 15l3-2" stroke="#d43636" strokeWidth="1.300" />
            </svg>
        </Tool>
        <Tool $width={28} aria-label="Configuration">
            <svg width="20" height="20" viewBox="0 0 20 20">
                <path d="M4.500 7v12" stroke="#891d1d" />
                <path d="M1.500 10.500h6v6h-6z" fill="#e05252" stroke="#891d1d" />
                <path d="M15.500 0v20" stroke="#157515" />
                <path d="M12.500 3.500h5v14h-5z" fill="#3fd03f" stroke="#157515" />
                <path d="M4 16l5-5c-1-3 1-5 4-5l-1.500 2.500 1.500 2 3-.5c-.500 3-2.500 4-5 3.500l-4.500 4.500z" fill="#fff" stroke="#111" />
            </svg>
        </Tool>
        <Tool $width={17} aria-label="Replier">
            <svg width="11" height="11" fill="none" stroke="#4f626e" strokeWidth="1.300"><path d="M5 .5L1 5.500l4 5M10 .5L6 5.500l4 5" /></svg>
        </Tool>
        <ScrollBar>
            <ScrollButton $left aria-label="Reculer"><svg width="4" height="8"><path d="M4 0v8L0 4z" /></svg></ScrollButton>
            <ScrollTrack />
            <ScrollThumb />
            <ScrollButton aria-label="Avancer"><svg width="4" height="8"><path d="M0 0v8l4-4z" /></svg></ScrollButton>
        </ScrollBar>
        <Tool $width={32} aria-label="Aller à une date">
            <svg width="23" height="20" viewBox="0 0 23 20">
                <path d="M5 2h17v15H5z" fill="#fff" />
                <path d="M5 2h17v5H5z" fill="#2a7eb5" />
                <path d="M8 0v4M12 0v4M16 0v4M20 0v4" stroke="#235f89" />
                <path d="M6 9h2M10 9h2M14 9h2M18 9h2M14 15h2M18 15h2" stroke="#8a9aa5" strokeWidth="2" />
                <path d="M15.500 10.500h3v3h-3z" fill="none" stroke="#e53939" />
                <path d="M0 14l7-5.500v3h7v5H7v3z" fill="#42cc42" stroke="#2c9a2c" strokeWidth=".6" />
            </svg>
        </Tool>
        {[['Annuler', 'M1 6l6-5v3c6 0 10 3 8 9-1 2-3 3-5 4 3-4 2-8-3-8v3z'], ['Rétablir', 'M16 6l-6-5v3C4 4 0 7 2 13c1 2 3 3 5 4-3-4-2-8 3-8v3z']].map(([label, path]) => (
            <Tool key={label} $width={29} disabled aria-label={label}>
                <svg width="17" height="18" fill="#78a6dd"><path d={path} /></svg>
            </Tool>
        ))}
        <Tool $width={29} aria-label="Zoom automatique">
            <svg width="22" height="22" viewBox="0 0 22 22">
                <path d="M13 13l5.500 5.500" stroke="#8d979e" strokeWidth="4" />
                <circle cx="8" cy="8" r="6.500" fill="#c6ced4" stroke="#959fa6" strokeWidth="1.500" />
                <path d="M18 2v10M16 4l2-2.500L20 4M16 10l2 2.500 2-2.500M1 18h10M3 16l-2.500 2L3 20M9 16l2.500 2L9 20" fill="none" stroke="#8589ea" strokeWidth="1.300" />
            </svg>
        </Tool>
        <Tool $width={29} aria-label="Zoom arrière"><Magnifier sign="M5 8.500h7" /></Tool>
        <Tool $width={29} aria-label="Zoom avant"><Magnifier sign="M5 8.500h7M8.500 5v7" /></Tool>
        <Tool $width={31} aria-label="Dernière cotation">
            <svg width="22" height="19" viewBox="0 0 22 19">
                <path d="M.5 1.500h21v6H.5z" fill="#fff" stroke="#a1adb4" />
                <path d="M2 3h3v3H2zM7 3h3v3H7zM12 3h3v3h-3zM17 3h3v3h-3z" fill="#222" />
                <path d="M9.500 9h3v4h3l-4.500 5-4.500-5h3z" fill="#2672c8" />
            </svg>
        </Tool>
    </Toolbar>
);

const App = () => (
    <>
        <GlobalStyle />
        <Page>
            <Header />
            <Orders />
            <PricePanel />
            <MacdPanel />
            <RsiPanel />
            <TimeAxis>
                <Plot>
                    <svg width={PLOT_WIDTH} height="22">
                        <path d={`M0 .5h${PLOT_WIDTH}`} stroke={COLORS.line} strokeWidth="2" />
                        {TIMES.map(time => (
                            <g key={time.x}>
                                <path d={`M${time.x} 0v4`} stroke={COLORS.line} />
                                <text x={time.x} y={time.hour ? 19 : 18} textAnchor="middle" fontSize={time.hour ? 14 : 12} fontWeight={time.hour ? 'bold' : 'normal'}>{time.label}</text>
                            </g>
                        ))}
                    </svg>
                </Plot>
            </TimeAxis>
            <BottomBar />
        </Page>
    </>
);

export default App;
